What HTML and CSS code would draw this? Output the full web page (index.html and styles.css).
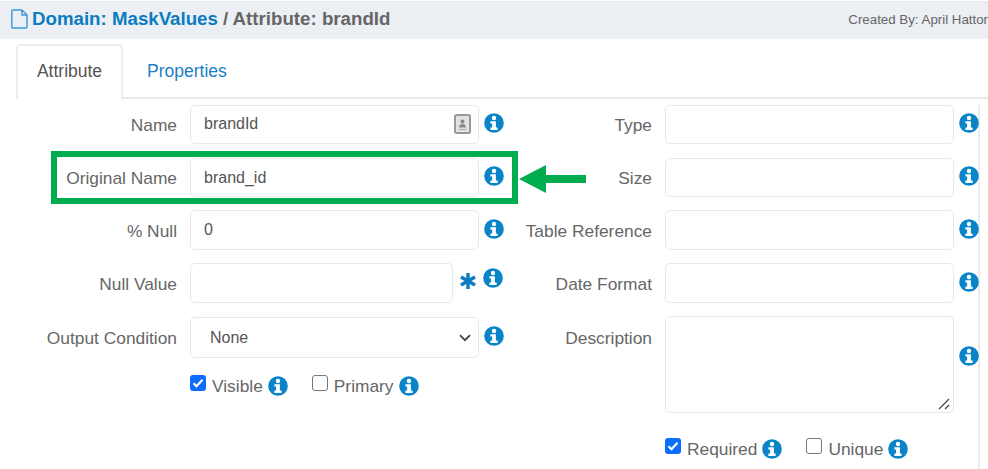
FILE: index.html
```html
<!DOCTYPE html>
<html lang="en">
<head>
<meta charset="utf-8">
<title>Attribute: brandId</title>
<link rel="stylesheet" href="styles.css">
</head>
<body>
<svg class="defs" width="0" height="0" aria-hidden="true">
  <symbol id="info" viewBox="0 0 20 20">
    <circle cx="10" cy="10" r="9.800" fill="#0a84c9"/>
    <circle cx="10" cy="5" r="2.200" fill="#fff"/>
    <path d="M6.400 8.200h5.500v6.400h1.700v2.300H6.400v-2.300h1.700v-4.100H6.400z" fill="#fff"/>
  </symbol>
</svg>
<div class="page">
  <header class="head">
    <h1 class="title">
      <svg class="doc" width="17" height="20" viewBox="0 0 17 20"><path d="M1.800 1h9.200l5 5v12a1 1 0 0 1-1 1H1.800a1 1 0 0 1-1-1V2a1 1 0 0 1 1-1z M11 1v5h5" fill="none" stroke="#3a9ad9" stroke-width="1.400"/></svg>
      <a class="link">Domain: MaskValues</a> <span>/ Attribute: brandId</span>
    </h1>
    <div class="creator">Created By: April Hatton</div>
  </header>
  <main class="panel">
    <nav class="tabs">
      <a class="tab active">Attribute</a>
      <a class="tab">Properties</a>
    </nav>
    <form class="form">
      <div class="col">
        <div class="row">
          <label class="lbl">Name</label>
          <div class="field"><input class="ctl" value="brandId">
            <svg class="badge" width="17" height="20" viewBox="0 0 17 20"><rect x="1" y="1" width="15" height="18" rx="1.500" fill="#e2e2e2" stroke="#999" stroke-width="2"/><circle cx="8.500" cy="7.500" r="2" fill="#888"/><path d="M5 13.500c0-2.500 1.500-3.500 3.500-3.500s3.500 1 3.500 3.500z" fill="#888"/><path d="M5 15.500h7" stroke="#aaa"/></svg>
          </div>
          <svg class="info"><use href="#info"/></svg>
        </div>
        <div class="row second">
          <label class="lbl">Original Name</label>
          <div class="field"><input class="ctl flush" value="brand_id"></div>
          <svg class="info"><use href="#info"/></svg>
        </div>
        <div class="row">
          <label class="lbl nudge">% Null</label>
          <div class="field"><input class="ctl big" value="0"></div>
          <svg class="info drop1"><use href="#info"/></svg>
        </div>
        <div class="row">
          <label class="lbl nudge">Null Value</label>
          <div class="field short"><input class="ctl big"></div>
          <span class="star">
            <svg width="16" height="16" viewBox="0 0 16 16"><path d="M6.300 0h3.400v5.100l4.500-2.600 1.700 3-4.400 2.500 4.400 2.500-1.700 3-4.500-2.600V16H6.300v-5.100l-4.500 2.600-1.700-3L4.500 8 .1 5.500l1.700-3 4.500 2.600z" fill="#0a7cc0"/></svg>
          </span>
          <svg class="info raised"><use href="#info"/></svg>
        </div>
        <div class="row">
          <label class="lbl low">Output Condition</label>
          <div class="field"><select class="ctl sel"><option>None</option></select>
            <svg class="chev" width="12" height="8" viewBox="0 0 12 8"><path d="M1 1.200l5 5 5-5" fill="none" stroke="#444" stroke-width="1.800"/></svg>
          </div>
          <svg class="info drop"><use href="#info"/></svg>
        </div>
        <div class="checks first">
          <label class="chk"><span class="box on"><svg width="16" height="16" viewBox="0 0 16 16"><path d="M3.500 8.200l3 3 6-6.500" fill="none" stroke="#fff" stroke-width="2.200"/></svg></span>Visible<svg class="info"><use href="#info"/></svg></label>
          <label class="chk"><span class="box"></span>Primary<svg class="info"><use href="#info"/></svg></label>
        </div>
      </div>
      <div class="col right">
        <div class="row">
          <label class="lbl">Type</label>
          <div class="field"><input class="ctl"></div>
          <svg class="info"><use href="#info"/></svg>
        </div>
        <div class="row second">
          <label class="lbl">Size</label>
          <div class="field"><input class="ctl"></div>
          <svg class="info"><use href="#info"/></svg>
        </div>
        <div class="row">
          <label class="lbl nudge">Table Reference</label>
          <div class="field"><input class="ctl big"></div>
          <svg class="info drop1"><use href="#info"/></svg>
        </div>
        <div class="row">
          <label class="lbl nudge">Date Format</label>
          <div class="field"><input class="ctl big"></div>
          <svg class="info drop1"><use href="#info"/></svg>
        </div>
        <div class="row tall">
          <label class="lbl low">Description</label>
          <div class="field"><textarea class="ctl area"></textarea>
            <svg class="grip" width="14" height="14" viewBox="0 0 14 14"><path d="M2 12L12 2M8 12l4-4" fill="none" stroke="#444" stroke-width="1.200"/></svg>
          </div>
          <svg class="info mid"><use href="#info"/></svg>
        </div>
        <div class="checks">
          <label class="chk"><span class="box on"><svg width="16" height="16" viewBox="0 0 16 16"><path d="M3.500 8.200l3 3 6-6.500" fill="none" stroke="#fff" stroke-width="2.200"/></svg></span>Required<svg class="info"><use href="#info"/></svg></label>
          <label class="chk"><span class="box"></span>Unique<svg class="info"><use href="#info"/></svg></label>
        </div>
      </div>
    </form>
  </main>
  <div class="callout"></div>
  <svg class="arrow" width="68" height="28" viewBox="0 0 68 28"><path d="M0 14L27 0v10h40v8H27v10z" fill="#00ac4e"/></svg>
</div>
</body>
</html>
```
FILE: styles.css
```css
* { box-sizing: border-box; }
html, body { margin: 0; padding: 0; height: 100%; overflow: hidden; }
body { background: #fff; color: #666; font-family: "Liberation Sans", Arial, sans-serif; font-size: 17.500px; }
.defs { position: absolute; }
.page { position: relative; width: 988px; height: 469px; overflow: hidden; }
.head { height: 38px; margin-top: 1px; padding: 0 0 3px 11px; background: #eceff4; border-top: 1px solid #e6e8ec; display: flex; justify-content: space-between; align-items: center; white-space: nowrap; }
.title { margin: 0; font-size: 18.700px; font-weight: 700; color: #666; display: flex; align-items: center; gap: 5px; }
.doc { flex: none; margin-right: -1px; }
.link { color: #0a7cc0; }
.creator { font-size: 13.300px; color: #666; margin-right: -3px; }
.panel { margin-left: 11px; padding: 5px 0 0 5px; }
.tabs { display: flex; height: 55px; border-bottom: 2px solid #e9e9e9; }
.tab { padding: 17px 0 0 24px; color: #1a7fc4; }
.tab.active { width: 107px; padding: 15px 0 0; text-align: center; color: #555; background: #fff; height: 55px; border: 2px solid #ececec; border-bottom: 0; border-radius: 5px 5px 0 0; }
.form { display: flex; height: 374px; margin-top: 6px; border-right: 2px solid #ececec; width: 964px; }
.col { width: 475px; flex: none; }
.row { display: flex; align-items: flex-start; height: 53px; }
.row.second { height: 52px; }
.row.tall { height: 121px; }
.lbl { width: 161px; flex: none; text-align: right; padding-top: 10px; line-height: 20px; font-size: 17.350px; }
.lbl.nudge { padding-top: 11px; }
.lbl.low { padding-top: 12px; }
.field { position: relative; width: 289px; margin-left: 13px; flex: none; }
.field.short { width: 263px; }
.ctl { display: block; width: 100%; height: 39px; padding: 0 13px 2px; border: 1.500px solid #e8e8e8; border-radius: 5px; background: #fff; color: #555; font: 16px "Liberation Sans", Arial, sans-serif; outline: 0; }
.ctl.big, .ctl.flush { padding-bottom: 0; }
.ctl.big { height: 40px; }
.sel { appearance: none; padding-left: 19px; padding-bottom: 0; height: 41px; margin-top: 1px; }
.area { height: 97px; resize: none; }
.info { width: 20px; height: 20px; flex: none; margin-left: 5px; margin-top: 8px; }
.info.drop1 { margin-top: 9px; }
.info.raised { margin-left: 7px; margin-top: 5px; }
.info.mid { margin-top: 30px; }
.info.drop { margin-top: 10px; }
.star { flex: none; width: 16px; height: 16px; margin-left: 7px; margin-top: 10px; }
.badge { position: absolute; right: 8px; top: 9px; }
.chev { position: absolute; right: 8px; top: 18px; }
.grip { position: absolute; right: 3px; bottom: 2px; }
.checks { display: flex; gap: 24px; margin-left: 174px; }
.checks.first { margin-top: 5px; }
.chk { display: flex; align-items: center; height: 24px; font-size: 17.350px; }
.chk .info { margin: 0 0 0 5px; }
.box { width: 16px; height: 16px; border: 1.500px solid #767676; border-radius: 3px; margin: -6px 6px 0 0; flex: none; }
.box.on { border: 0; background: #0d6efd; }
.box svg { display: block; }
.callout { position: absolute; left: 51px; top: 151px; width: 467px; height: 53px; border: 6px solid #00ac4e; }
.arrow { position: absolute; left: 519px; top: 165px; }
```
